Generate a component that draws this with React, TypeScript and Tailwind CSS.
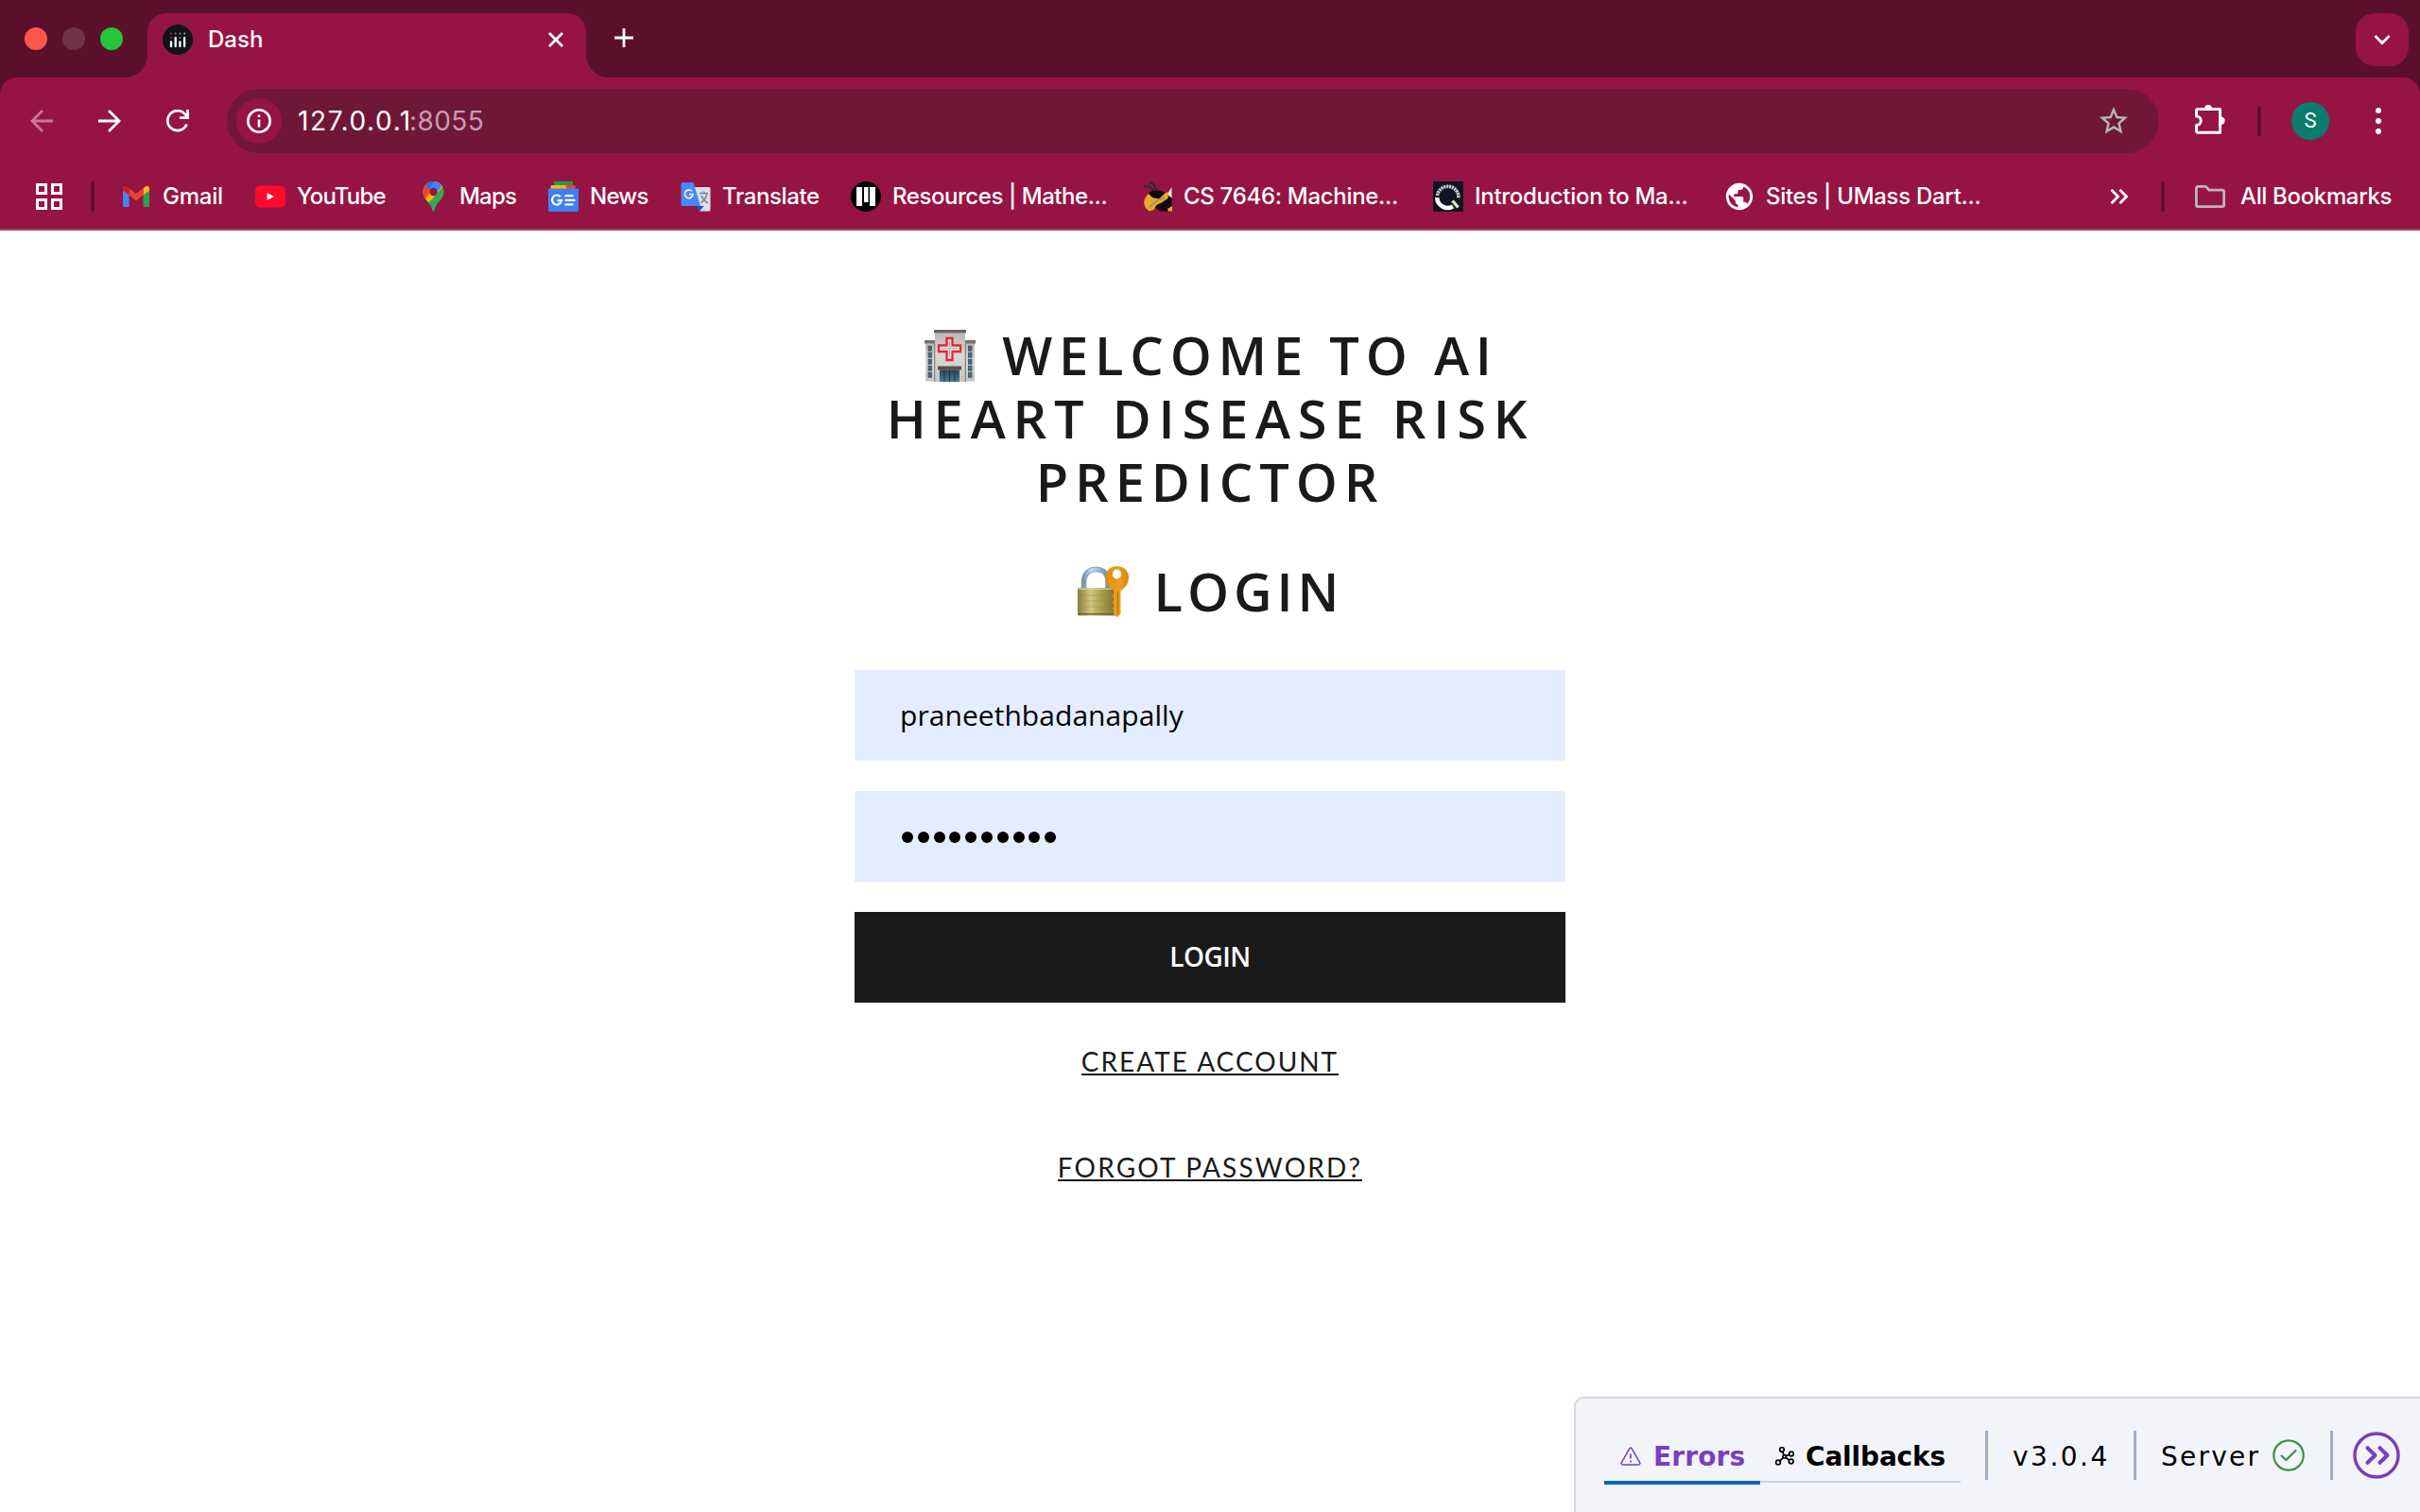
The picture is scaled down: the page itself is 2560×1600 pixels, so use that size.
import type { ReactNode } from 'react';

function DashFavicon() {
  const cols = [0, 1, 2, 3];
  return (
    <svg viewBox="0 0 32 32" className="size-8 shrink-0">
      <circle cx="16" cy="16" r="16" fill="#111417" />
      {cols.map((i) => (
        <g key={i}>
          <circle cx={9 + i * 4.7} cy="9.5" r="1" fill={['#b8355f', '#c45a84', '#9a94c4', '#6fb7d6'][i]} />
          {i !== 3 && <circle cx={9 + i * 4.7} cy="14" r="1" fill={['#c22f5c', '#b8355f', '#8f86b8'][i]} opacity={i === 1 ? 0 : 1} />}
        </g>
      ))}
      <g stroke="#fff" strokeWidth="2.3" strokeLinecap="round">
        <path d="M9 18.5V23M13.7 14V23M18.4 18.5V23M23.1 14V23" />
      </g>
    </svg>
  );
}

function GmailIcon() {
  return (
    <svg viewBox="0 0 32 32" className="size-8">
      <path d="M2 9v16.500a1.500 1.500 0 0 0 1.500 1.500H8.500V13.500z" fill="#4285f4" />
      <path d="M23.500 27h5a1.500 1.500 0 0 0 1.500-1.500V9l-6.500 4.500z" fill="#2ba24c" />
      <path d="M23.500 7.300V14.500L30 9.500V7.500c0-2.400-2.600-3.400-4.300-2z" fill="#fbbc04" />
      <path d="M8.500 14.500V7.300L16 13l7.500-5.700v7.200L16 20.300z" fill="#ea4335" />
      <path d="M2 7.500v2l6.500 5V7.300L6.300 5.500C4.600 4.100 2 5.100 2 7.500z" fill="#c5221f" />
    </svg>
  );
}

function YouTubeIcon() {
  return (
    <svg viewBox="0 0 32 32" className="size-8">
      <rect y="4.500" width="32" height="23" rx="5" fill="#ff0a2d" />
      <path d="M12.500 12v8l7.500-4z" fill="#fff" />
    </svg>
  );
}

function MapsIcon() {
  return (
    <svg viewBox="0 0 32 32" className="size-8">
      <defs>
        <clipPath id="pin">
          <path d="M16.500 0C10.200 0 5.500 4.900 5.500 11c0 8.500 8 10.500 9.800 19.500.3 1.800 2.100 1.800 2.400 0C19.500 21.500 27.500 19.500 27.500 11c0-6.100-4.700-11-11-11z" />
        </clipPath>
      </defs>
      <g clipPath="url(#pin)">
        <rect width="32" height="32" fill="#34a853" />
        <path d="M0 0h32L27 5 14 20 0 32z" fill="#fbbc04" />
        <path d="M0 0h20L8.500 18 0 18z" fill="#ea4335" />
        <path d="M8 3.500L14 -2h16l-4 6.500-6 7z" fill="#4285f4" />
        <path d="M8 3.500L13 0l4 0-4.500 7.500z" fill="#1a73e8" />
      </g>
      <circle cx="16.500" cy="11" r="4.200" fill="#961444" />
    </svg>
  );
}

function NewsIcon() {
  return (
    <svg viewBox="0 0 32 32" className="size-8">
      <path d="M6 0h20v8H6z" fill="#1e9e4a" />
      <path d="M18 3l11 1.500L28 9H18z" fill="#ea4335" />
      <path d="M3 4h15l2 5H2z" fill="#fbb40a" />
      <path d="M0 7.500h32V30a2 2 0 0 1-2 2H2a2 2 0 0 1-2-2z" fill="#4080f5" />
      <path d="M12.800 16.200A5 5 0 1 0 14 20.200H9.500" fill="none" stroke="#fff" strokeWidth="2.200" />
      <path d="M17.500 15.200h9M17.500 19.800h11M17.500 24.400h9" stroke="#fff" strokeWidth="2.300" />
    </svg>
  );
}

function TranslateIcon() {
  return (
    <svg viewBox="0 0 32 32" className="size-8">
      <path d="M13 6h17a1.500 1.500 0 0 1 1.500 1.500V30a1.500 1.500 0 0 1-1.500 1.500H20z" fill="#dcdfe4" />
      <path d="M20 12.500h9M24.500 10.500v2M28 12.500c-1 5-3.500 8-6.500 10M22 15c1.500 4 3.500 6 7 8" fill="none" stroke="#7c8c98" strokeWidth="1.700" />
      <path d="M16.500 26h8L20 31.500z" fill="#1a4fc4" />
      <path d="M2 1h11.500L21 26H2a1.500 1.500 0 0 1-1.500-1.500v-22A1.500 1.500 0 0 1 2 1z" fill="#4688f4" />
      <path d="M12 10.500A4.300 4.300 0 1 0 13 13.600H9" fill="none" stroke="#e3edfd" strokeWidth="1.800" />
    </svg>
  );
}

function ResourcesIcon() {
  return (
    <svg viewBox="0 0 32 32" className="size-8">
      <circle cx="16" cy="16" r="16" fill="#000" />
      <path d="M6 6h6v20H6zM14 6h4.500v16H14zM20 6h6v20h-6z" fill="#fff" />
    </svg>
  );
}

function BeeIcon() {
  return (
    <svg viewBox="0 0 32 32" className="size-8">
      <path d="M2 5l6 .5 5 5M8 1l4 1.500 4 8" fill="none" stroke="#2b2b2b" strokeWidth="2" />
      <path d="M31.500 6v12l-7-1z" fill="#e8e8ec" />
      <path d="M7 12l4-2 9-.5 5 3 6.500 5V31.500H20L8 24z" fill="#0c0b08" />
      <path d="M3 18l4-5 4 4 7 1.500 7-6.500 3.500-1-1 7-6 4-6 3-3 5-5 1.500-4-4-1.500-5z" fill="#eaaa2c" />
      <path d="M8 27l8-7 8-3" fill="none" stroke="#a8935c" strokeWidth="2" />
      <path d="M27 29l5-3v5.500h-4z" fill="#eaaa2c" />
    </svg>
  );
}

function QuantIcon() {
  return (
    <svg viewBox="0 0 32 32" className="size-8">
      <rect width="32" height="32" fill="#121521" />
      <path d="M4.500 15A11.200 11.200 0 0 1 26.800 18" fill="none" stroke="#c9ccd3" strokeWidth="3.600" strokeDasharray="2.200 .7" />
      <path d="M4.200 17A11.300 11.300 0 0 0 21 26.500" fill="none" stroke="#fff" strokeWidth="4.500" />
      <path d="M20.500 20.500l6 7" stroke="#dfe9cf" strokeWidth="3.400" />
      <path d="M19.500 21.500l5 6" stroke="#6f9a49" strokeWidth="1" />
    </svg>
  );
}

function GlobeIcon() {
  return (
    <svg viewBox="0 0 24 24" className="-ml-px size-[34px] shrink-0" fill="#fff">
      <path d="M12 2C6.480 2 2 6.480 2 12s4.480 10 10 10 10-4.480 10-10S17.520 2 12 2zM4 12c0-.61.08-1.210.21-1.780L8.990 15v1c0 1.100.9 2 2 2v1.930C7.060 19.430 4 16.070 4 12zm13.890 5.400c-.26-.81-1-1.400-1.900-1.400h-1v-3c0-.55-.45-1-1-1h-6v-2h2c.55 0 1-.45 1-1V7h2c1.100 0 2-.9 2-2v-.41C17.920 5.770 20 8.650 20 12c0 2.080-.81 3.980-2.110 5.400z" />
    </svg>
  );
}

function HospitalEmoji() {
  const windows = [0, 1, 2, 3, 4];
  return (
    <svg viewBox="0 0 54 56" className="h-[56px] w-[54px] shrink-0">
      <defs>
        <linearGradient id="wall" x1="0" y1="0" x2="0" y2="1">
          <stop offset="0" stopColor="#b9b4b0" />
          <stop offset=".5" stopColor="#dad8d5" />
          <stop offset="1" stopColor="#c6c4c2" />
        </linearGradient>
        <linearGradient id="door" x1="0" y1="0" x2="0" y2="1">
          <stop offset="0" stopColor="#2a4353" />
          <stop offset="1" stopColor="#4a7e9e" />
        </linearGradient>
      </defs>
      <rect x="1" y="12" width="52" height="42.500" fill="url(#wall)" />
      <path d="M0 11h54v3.500H0z" fill="#77706e" />
      <rect x="11" y="1" width="32" height="54" fill="url(#wall)" />
      <path d="M10 14.500h1.300V55H10zM42.700 14.500H44V55h-1.300z" fill="#8d8986" />
      <path d="M10 0h34v3.200H10z" fill="#6b6462" />
      <path d="M23.500 9h6v7.500H38v6.500h-8.500v9h-6v-9H15v-6.500h8.500z" fill="#f4e5e4" stroke="#e02735" strokeWidth="2.300" />
      <path d="M26.500 12v17M18 19.700h17" stroke="#b9b3b0" strokeWidth="1.300" />
      <path d="M14 38.500h25v4H14z" fill="#574f4d" />
      <rect x="16" y="42.500" width="21" height="12.500" fill="url(#door)" />
      <path d="M21 42.500V55M26.500 42.500V55M32 42.500V55" stroke="#26333c" strokeWidth="1" />
      {windows.map((i) => (
        <g key={i} fill="#3c7390" stroke="#3a4146" strokeWidth=".7">
          <rect x="4" y={17.200 + i * 7} width="3.600" height="5" />
          <rect x="46.400" y={17.200 + i * 7} width="3.600" height="5" />
        </g>
      ))}
    </svg>
  );
}

function LockKeyEmoji() {
  return (
    <svg viewBox="0 0 54 54" className="h-[54px] w-[54px] shrink-0">
      <defs>
        <linearGradient id="brass" x1="0" y1="0" x2="1" y2="0">
          <stop offset="0" stopColor="#85803c" />
          <stop offset=".35" stopColor="#cfc885" />
          <stop offset=".6" stopColor="#aba451" />
          <stop offset="1" stopColor="#77712f" />
        </linearGradient>
        <linearGradient id="shackle" x1="0" y1="0" x2="1" y2="0">
          <stop offset="0" stopColor="#7d96b5" />
          <stop offset=".3" stopColor="#c3dcfb" />
          <stop offset="1" stopColor="#6f8db5" />
        </linearGradient>
        <linearGradient id="gold" x1="0" y1="0" x2="1" y2="0">
          <stop offset="0" stopColor="#dc8f12" />
          <stop offset=".6" stopColor="#ec9f1d" />
          <stop offset="1" stopColor="#cf850f" />
        </linearGradient>
      </defs>
      <path d="M6.500 25V18C6.500 8 12 3.500 19.500 3.500S32 8 32 16v9" fill="none" stroke="#8194ad" strokeWidth="5.600" />
      <path d="M6.500 25V18C6.500 8 12 3.500 19.500 3.500S32 8 32 16v9" fill="none" stroke="url(#shackle)" strokeWidth="3.800" />
      <rect x="0" y="23" width="40" height="29.500" rx="1.500" fill="url(#brass)" />
      <path d="M0 31h39M0 37h39M0 43h39" stroke="#8c863f" strokeWidth=".7" opacity=".6" />
      <path d="M1 24.200h38" stroke="#dcd69a" strokeWidth="1.200" />
      <path d="M1 50.800h38" stroke="#6d6729" strokeWidth="1.500" />
      <path d="M41.500 0C34.500 0 29.500 5.200 29.500 12c0 6 3.500 11.500 8.500 13.500v5l-1.500 1.500 1.500 2v3l-1.500 1.500 1.500 2v3l-1.500 1.500L38 47v4l3.500 3 4-3V26C50.500 23.500 54 18 54 12 54 5.200 48.500 0 41.500 0zm0 3.500a4.600 5 0 1 1 0 10 4.600 5 0 0 1 0-10z" fill="url(#gold)" fillRule="evenodd" />
      <path d="M42.500 27v24" stroke="#b8740c" strokeWidth="1.200" />
    </svg>
  );
}

function Bookmark({ icon, label, className, textClass }: { icon: ReactNode; label: string; className: string; textClass: string }) {
  return (
    <div className={`flex shrink-0 items-center gap-3 ${className}`}>
      <span className="flex size-8 shrink-0 items-center justify-center">{icon}</span>
      <span className={`whitespace-nowrap ${textClass}`}>{label}</span>
    </div>
  );
}

function TabStrip() {
  return (
    <div className="flex h-[82px] items-end bg-[#5a102b]">
      <div className="flex h-[82px] w-[132px] shrink-0 items-center gap-4 pl-[26px]">
        <span className="size-6 rounded-full bg-[#ff564e]" />
        <span className="size-6 rounded-full bg-[#713249]" />
        <span className="size-6 rounded-full bg-[#27c439]" />
      </div>
      <span className="size-6 shrink-0 bg-[radial-gradient(circle_at_0_0,transparent_23.5px,#961444_24.5px)]" />
      <div className="flex h-[68px] w-[464px] shrink-0 items-center rounded-t-[20px] bg-[#961444] pb-3 pl-4 pr-6">
        <DashFavicon />
        <span className="ml-4 flex-1 text-[24px] font-medium">Dash</span>
        <svg viewBox="0 0 16 16" className="size-4" stroke="#fff" strokeWidth="2.800">
          <path d="M1 1l14 14M15 1L1 15" />
        </svg>
      </div>
      <span className="size-6 shrink-0 bg-[radial-gradient(circle_at_100%_0,transparent_23.5px,#961444_24.5px)]" />
      <div className="flex h-[82px] flex-1 items-center pl-[6px]">
        <svg viewBox="0 0 20 20" className="-mt-[3px] size-5" stroke="#fff" strokeWidth="2.800">
          <path d="M10 0v20M0 10h20" />
        </svg>
      </div>
      <div className="mb-3 mr-3 flex size-14 shrink-0 items-center justify-center rounded-[20px] bg-[#961444]">
        <svg viewBox="0 0 18 12" className="h-3 w-[18px]" fill="none" stroke="#fff" strokeWidth="2.800">
          <path d="M1.500 2L9 9.500 16.500 2" />
        </svg>
      </div>
    </div>
  );
}

function Toolbar() {
  return (
    <div className="flex h-[92px] items-center">
      <svg viewBox="0 0 24 24" className="ml-8 size-6 shrink-0" fill="none" stroke="#c5799a" strokeWidth="2.800">
        <path d="M13 1L2 12l11 11M2 12h22" />
      </svg>
      <svg viewBox="0 0 24 24" className="ml-12 size-6 shrink-0" fill="none" stroke="#fff" strokeWidth="2.800">
        <path d="M11 1l11 11-11 11M22 12H0" />
      </svg>
      <svg viewBox="0 0 24 24" className="ml-12 size-6 shrink-0" fill="none" stroke="#fff" strokeWidth="2.800">
        <path d="M21.500 15.500A10.500 10.500 0 1 1 20.300 5.500L23 8.300" />
        <path d="M22.600 0v8.600H14" />
      </svg>
      <div className="ml-10 flex h-[68px] w-[2044px] shrink-0 items-center rounded-full bg-[#701738] pl-[10px] pr-[31px]">
        <span className="flex size-12 items-center justify-center rounded-full bg-[#961444]">
          <svg viewBox="0 0 26 26" className="size-[26px]" fill="none" stroke="#fff" strokeWidth="2.600">
            <circle cx="13" cy="13" r="11.700" />
            <path d="M13 11.500v8M13 6.500v2.600" />
          </svg>
        </span>
        <span className="ml-[17px] text-[28px] tracking-[1.600px]">127.0.0.1</span>
        <span className="-ml-[3px] flex-1 text-[28px] tracking-[0.480px] text-[#c79bae]">:8055</span>
        <svg viewBox="0 0 24 24" className="-mr-px size-9" fill="#b9b6b8">
          <path d="M22 9.240l-7.190-.62L12 2 9.190 8.630 2 9.240l5.460 4.730L5.820 21 12 17.270 18.180 21l-1.630-7.030L22 9.240zM12 15.400l-3.760 2.270 1-4.280-3.320-2.880 4.380-.38L12 6.100l1.710 4.040 4.380.38-3.320 2.880 1 4.280L12 15.400z" />
        </svg>
      </div>
      <svg viewBox="0 0 32 32" className="-mt-1 ml-[38px] size-8 shrink-0" fill="none" stroke="#fff" strokeWidth="3">
        <path d="M3 5.500H26.500V30.200H3a1.500 1.500 0 0 1-1.500-1.500V22.500a4.500 4.500 0 0 0 0-9.500V7A1.500 1.500 0 0 1 3 5.500z" strokeLinejoin="round" />
        <path d="M10 5a4 4 0 0 1 8 0zM27.500 13.500a4.200 4.200 0 0 1 0 8.400z" fill="#fff" stroke="none" />
      </svg>
      <span className="ml-[34px] h-8 w-1 shrink-0 rounded-full bg-[#5f0f2c]" />
      <span className="ml-8 flex size-10 shrink-0 items-center justify-center rounded-full bg-[#0b7d6c] font-[Roboto] text-[22px]">S</span>
      <div className="ml-[49px] flex shrink-0 flex-col gap-[5px]">
        <span className="size-[6px] rounded-full bg-white" />
        <span className="size-[6px] rounded-full bg-white" />
        <span className="size-[6px] rounded-full bg-white" />
      </div>
    </div>
  );
}

function BookmarksBar() {
  return (
    <div className="flex h-[70px] items-center border-b-2 border-[#ab3f69] text-[24px] font-medium">
      <svg viewBox="0 0 28 28" className="ml-[38px] size-7 shrink-0" fill="none" stroke="#fff" strokeWidth="3">
        <path d="M1.500 1.500h9v9h-9zM17.500 1.500h9v9h-9zM1.500 17.500h9v9h-9zM17.500 17.500h9v9h-9z" />
      </svg>
      <span className="ml-[30px] h-8 w-1 shrink-0 rounded-full bg-[#5f0f2c]" />
      <Bookmark className="ml-7 w-[142px]" textClass="tracking-[-0.230px]" icon={<GmailIcon />} label="Gmail" />
      <Bookmark className="w-[172px]" textClass="tracking-[-0.850px]" icon={<YouTubeIcon />} label="YouTube" />
      <Bookmark className="w-[138px]" textClass="tracking-[-0.790px]" icon={<MapsIcon />} label="Maps" />
      <Bookmark className="w-[140px]" textClass="tracking-[-0.750px]" icon={<NewsIcon />} label="News" />
      <Bookmark className="w-[180px]" textClass="tracking-[-0.390px]" icon={<TranslateIcon />} label="Translate" />
      <Bookmark className="w-[308px]" textClass="tracking-[-0.440px]" icon={<ResourcesIcon />} label="Resources | Mathe..." />
      <Bookmark className="w-[308px]" textClass="tracking-[-0.300px]" icon={<BeeIcon />} label="CS 7646: Machine..." />
      <Bookmark className="w-[308px]" textClass="tracking-[-0.280px]" icon={<QuantIcon />} label="Introduction to Ma..." />
      <Bookmark className="w-[408px]" textClass="tracking-[-0.300px]" icon={<GlobeIcon />} label="Sites | UMass Dart..." />
      <svg viewBox="0 0 20 16" className="h-4 w-5 shrink-0" fill="none" stroke="#fff" strokeWidth="2.800">
        <path d="M1.500 0.800L8.500 8l-7 7.200M10.500 0.800L17.500 8l-7 7.200" />
      </svg>
      <span className="ml-[34px] h-8 w-1 shrink-0 rounded-full bg-[#5f0f2c]" />
      <svg viewBox="0 0 32 26" className="ml-8 h-[26px] w-8 shrink-0" fill="none" stroke="#b9b6b8" strokeWidth="2.800" strokeLinejoin="round">
        <path d="M3 2.400H11.500L15 6.200H29a1.600 1.600 0 0 1 1.600 1.600V22a1.600 1.600 0 0 1-1.600 1.600H3A1.600 1.600 0 0 1 1.400 22V4A1.600 1.600 0 0 1 3 2.400z" />
      </svg>
      <span className="ml-4 whitespace-nowrap tracking-[-0.350px]">All Bookmarks</span>
    </div>
  );
}

function LoginForm() {
  return (
    <main className="mx-auto flex w-[752px] flex-col items-center pt-[98px] font-['Open_Sans',sans-serif] text-[#1a1a1a]">
      <h1 className="flex flex-col items-center whitespace-nowrap text-[56px] font-semibold leading-[67px]">
        <span className="ml-[3px] flex items-start gap-[28px]">
          <span className="pt-[7px]"><HospitalEmoji /></span>
          <span className="tracking-[6.800px]">WELCOME TO AI</span>
        </span>
        <span className="ml-px tracking-[7.780px]">HEART DISEASE RISK</span>
        <span className="tracking-[6.900px]">PREDICTOR</span>
      </h1>
      <h2 className="ml-px mt-[49px] flex items-start gap-[27px] whitespace-nowrap text-[56px] font-semibold leading-[67px]">
        <span className="pt-[7px]"><LockKeyEmoji /></span>
        <span className="tracking-[4.940px]">LOGIN</span>
      </h2>
      <div className="mt-[50px] flex h-24 w-full items-center bg-[#e4edff] pb-[2px] pl-12 text-[30px] tracking-[0.050px] text-black">
        praneethbadanapally
      </div>
      <div className="mt-8 flex h-24 w-full items-center gap-[4.800px] bg-[#e4edff] pl-[50px] pt-[2px]">
        {Array.from({ length: 10 }, (_, i) => (
          <span key={i} className="size-3 rounded-full bg-black" />
        ))}
      </div>
      <button className="mt-8 h-24 w-full bg-[#1a1a1a] pb-[2px] text-[28px] font-semibold tracking-[-0.500px] text-white">LOGIN</button>
      <a className="mt-[49px] border-b-2 border-[#1a1a1a] font-[Lato] text-[28px] leading-[26px] tracking-[2px]">CREATE ACCOUNT</a>
      <a className="mt-[84px] border-b-2 border-[#1a1a1a] font-[Lato] text-[28px] leading-[26px] tracking-[2.200px]">FORGOT PASSWORD?</a>
    </main>
  );
}

function DevTools() {
  return (
    <div className="absolute bottom-0 right-0 flex h-[122px] w-[895px] rounded-tl-[10px] border-l-2 border-t-2 border-[#d5d9e7] bg-[#f3f4fa] pl-[30px] font-['DejaVu_Sans',sans-serif] text-[28px] text-black">
      <div className="mt-[35px] flex h-14">
        <div className="flex w-[165px] items-center border-b-4 border-[#0563c1] pl-[17px] font-bold text-[#7640bf]">
          <svg viewBox="0 0 22 20" className="size-[22px] shrink-0" fill="none" stroke="#7640bf" strokeWidth="1.500" strokeLinejoin="round">
            <path d="M9.800 1.800a1.400 1.400 0 0 1 2.400 0l8.500 15a1.400 1.400 0 0 1-1.200 2.100H2.500a1.400 1.400 0 0 1-1.200-2.100z" />
            <path d="M11 7.500v5M11 14.500v2" strokeWidth="1.700" />
          </svg>
          <span className="ml-[13px] pt-px tracking-[0.140px]">Errors</span>
        </div>
        <div className="flex h-[54px] w-[212px] items-center border-b-2 border-[#c8d2e0] pl-4 font-bold">
          <svg viewBox="0 0 20 20" className="size-5 shrink-0" fill="none" stroke="#000" strokeWidth="1.700">
            <circle cx="7" cy="3" r="2.300" />
            <circle cx="3" cy="16.500" r="2.400" />
            <circle cx="17" cy="7.500" r="2.300" />
            <circle cx="16.700" cy="15.500" r="2.300" />
            <circle cx="9.700" cy="10.300" r="1.700" />
            <path d="M7.700 5.300l1.300 3.300M4.800 14.800l3.500-3.200M11.300 9.700l3.500-1.500M11.200 11.300l3.500 2.900" />
          </svg>
          <span className="ml-3 pt-px tracking-[-0.160px]">Callbacks</span>
        </div>
      </div>
      <div className="mt-[34px] flex h-[52px] items-center">
        <span className="ml-[26px] h-full w-[3px] bg-[#a2aac6]" />
        <span className="ml-[26px] w-[128px] pt-[3px] tracking-[2.500px]">v3.0.4</span>
        <span className="h-full w-[3px] bg-[#a2aac6]" />
        <span className="ml-[26px] w-[118px] pt-[3px] tracking-[2.240px]">Server</span>
        <svg viewBox="0 0 34 34" className="size-[34px]" fill="none" stroke="#3e913f" strokeWidth="2.200">
          <circle cx="17" cy="17" r="15.700" />
          <path d="M9.500 17.500l4.800 4.500L24.500 12" strokeLinecap="round" strokeLinejoin="round" />
        </svg>
        <span className="ml-[27px] h-full w-[3px] bg-[#a2aac6]" />
        <svg viewBox="0 0 50 50" className="ml-[21px] size-[50px]" fill="none" stroke="#7640bf" strokeWidth="3.400">
          <circle cx="25" cy="25" r="23" />
          <path d="M15.500 17.200l8 7.800-8 7.800M28.500 17.200l8 7.800-8 7.800" strokeWidth="4" strokeLinecap="round" strokeLinejoin="round" />
        </svg>
      </div>
    </div>
  );
}

export default function App() {
  return (
    <div className="relative h-[1600px] w-[2560px] overflow-hidden bg-white">
      <header className="h-[244px] bg-[#5a102b] font-[Inter] leading-none text-white">
        <TabStrip />
        <div className="rounded-t-[18px] bg-[#961444]">
          <Toolbar />
          <BookmarksBar />
        </div>
      </header>
      <LoginForm />
      <DevTools />
    </div>
  );
}
